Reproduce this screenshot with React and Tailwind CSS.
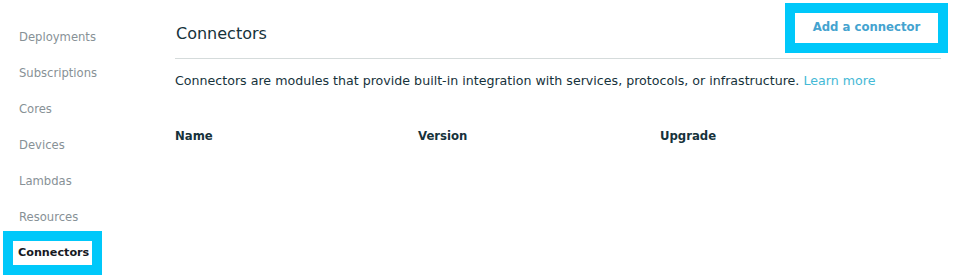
import React from 'react';

const navItems = ['Deployments', 'Subscriptions', 'Cores', 'Devices', 'Lambdas', 'Resources', 'Connectors'];

const App = () => {
  const active = 'Connectors';

  return (
    <div className="flex w-[958px] h-[280px] bg-white font-['DejaVu_Sans',sans-serif] overflow-hidden">
      {/* side nav */}
      <nav className="w-[160px] shrink-0 pt-[20px]">
        <ul className="flex flex-col">
          {navItems.map((item) =>
            item === active ? (
              <li key={item} className="ml-[3px] w-[99px] h-[44px] border-[10px] border-[#00c8fa] bg-white flex items-center pl-[5px] -mt-[5px]">
                <span className="text-[11.2px] font-bold text-[#16191f] leading-none">{item}</span>
              </li>
            ) : (
              <li key={item} className="h-[36px] pl-[19px] flex items-center text-[11.6px] text-[#879196] leading-none">
                {item}
              </li>
            )
          )}
        </ul>
      </nav>

      {/* main */}
      <main className="flex-1 pl-[15px] pr-[17px]">
        <div className="flex items-end justify-between border-b border-[#d5dbdb] h-[59px]">
          <h1 className="text-[16px] text-[#16323b] leading-none pb-[16px] pl-[1px]">Connectors</h1>
          <button className="mb-[5px] -mr-[7px] w-[163px] h-[50px] border-[10px] border-[#00c8fa] bg-white text-[11.7px] font-bold text-[#44a3cf] leading-none flex items-center justify-center">
            Add a connector
          </button>
        </div>

        <p className="mt-[14px] text-[12.64px] text-[#16323b] leading-[16px]">
          Connectors are modules that provide built-in integration with services, protocols, or infrastructure.{' '}
          <a href="#" className="text-[#44b9d6]">Learn more</a>
        </p>

        <div className="mt-[39px] grid grid-cols-[243px_242px_1fr] text-[11.7px] font-bold text-[#16323b] leading-[16px]">
          <div>Name</div>
          <div>Version</div>
          <div>Upgrade</div>
        </div>
      </main>
    </div>
  );
};

export default App;
